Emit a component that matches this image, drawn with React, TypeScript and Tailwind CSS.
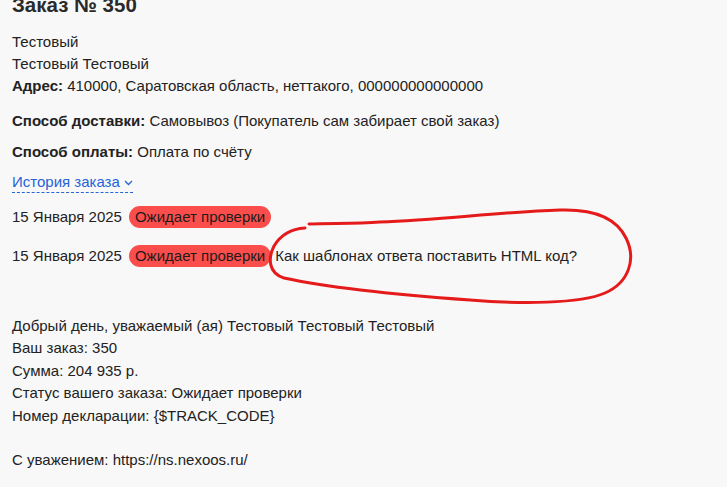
import React from "react";

function Badge() {
  return (
    <span className="inline-flex items-center h-[22px] px-[6px] rounded-full bg-[#fb4d4b] text-[#1c1c1c] leading-[22px]">
      Ожидает проверки
    </span>
  );
}

export default function App() {
  return (
    <div
      className="relative w-[727px] h-[487px] overflow-hidden bg-[#f8f8f8] text-[#222] text-[15px] pl-[12px]"
      style={{ fontFamily: '"Liberation Sans", Arial, sans-serif' }}
    >
      <h3 className="text-[20.5px] font-bold leading-[24px] mt-[-7px] text-[#2a2a2a]">Заказ № 350</h3>
      <div className="mt-[14px] leading-[22px]">
        <div>Тестовый</div>
        <div>Тестовый Тестовый</div>
        <div>
          <b>Адрес:</b> 410000, Саратовская область, неттакого, 000000000000000
        </div>
      </div>
      <div className="mt-[13px] leading-[22px]">
        <b>Способ доставки:</b> Самовывоз (Покупатель сам забирает свой заказ)
      </div>
      <div className="mt-[9px] leading-[22px]">
        <b>Способ оплаты:</b> Оплата по счёту
      </div>
      <div className="mt-[9px] leading-[22px] flex">
        <span className="inline-flex items-center text-[#2563d9] border-b border-dashed border-[#2563d9] leading-[20px]">
          История заказа
          <svg width="9" height="6" viewBox="0 0 9 6" className="ml-[4px] mt-[2px]">
            <path d="M1 1 L4.5 4.5 L8 1" fill="none" stroke="#2563d9" strokeWidth="1.3" />
          </svg>
        </span>
      </div>
      <div className="mt-[13px] flex items-center gap-[7px] leading-[22px]">
        <span>15 Января 2025</span>
        <Badge />
      </div>
      <div className="mt-[17px] flex items-center leading-[22px]">
        <span>15 Января 2025</span>
        <span className="ml-[7px]">
          <Badge />
        </span>
        <span className="ml-[4px]">Как шаблонах ответа поставить HTML код?</span>
      </div>
      <div className="mt-[48px] leading-[22.4px]">
        <div>Добрый день, уважаемый (ая) Тестовый Тестовый Тестовый</div>
        <div>Ваш заказ: 350</div>
        <div>Сумма: 204 935 р.</div>
        <div>Статус вашего заказа: Ожидает проверки</div>
        <div>Номер декларации: {"{$TRACK_CODE}"}</div>
        <div className="h-[22.4px]" />
        <div>С уважением: https://ns.nexoos.ru/</div>
      </div>
      <svg className="absolute left-0 top-0 pointer-events-none" width="727" height="487" viewBox="0 0 727 487">
        <path
          d="M309,224 C330,223 355,224 380,222 C440,220 500,212 560,210 C590,209 615,215 626,238 C636,258 630,282 605,293 C580,304 520,304 470,300 C400,295 330,288 284,278 C268,273 268,258 274,246 C280,236 290,229 305,228"
          fill="none"
          stroke="#e51b1b"
          strokeWidth="3"
          strokeLinecap="round"
          strokeLinejoin="round"
        />
      </svg>
    </div>
  );
}
